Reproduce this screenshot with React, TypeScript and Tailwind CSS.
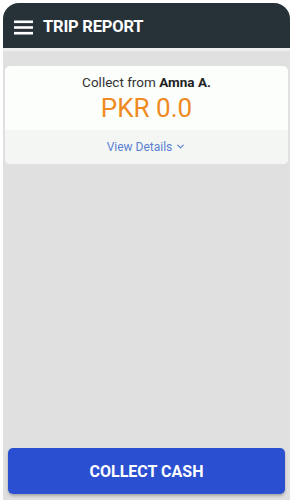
import { ChevronDown } from 'lucide-react'

export default function App() {
  return (
    <div className="w-[293px] h-[504px] bg-white pt-[3px] px-[3px] pb-[4px]" style={{ fontFamily: 'Roboto, "Liberation Sans", sans-serif' }}>
      <div className="h-full w-[287px] flex flex-col rounded-t-[16px] overflow-hidden bg-[#e0e0e0]">
        {/* Barra superior */}
        <div className="h-[45px] bg-[#263238] flex items-center pl-[11px] pt-[3px] gap-[10px] shrink-0">
          <svg width="19" height="15" viewBox="0 0 19 15">
            <rect x="0" y="0.5" width="19" height="2.6" fill="#fff" />
            <rect x="0" y="6.2" width="19" height="2.6" fill="#fff" />
            <rect x="0" y="11.9" width="19" height="2.6" fill="#fff" />
          </svg>
          <span className="text-white font-bold text-[16.5px] tracking-[-0.2px]">TRIP REPORT</span>
        </div>
        <div className="h-[3px] bg-[#eeeeee] shrink-0" />

        <div className="flex-1 flex flex-col px-[2px] pt-[15px]">
          {/* Tarjeta */}
          <div className="rounded-[5px] overflow-hidden bg-[#fbfefb]">
            <div className="pt-[7px] pb-[7px] flex flex-col items-center">
              <p className="text-[13.5px] text-[#333] leading-[19px]">
                Collect from <span className="font-bold text-[#222]">Amna A.</span>
              </p>
              <p className="text-[26px] text-[#ef8a22] leading-[30px] mt-[1px]">PKR 0.0</p>
            </div>
            <div className="bg-[#f3f6f3] h-[34px] flex items-center justify-center gap-[3px] pb-[1px]">
              <span className="text-[12px] text-[#5b7fd4]">View Details</span>
              <ChevronDown size={11} strokeWidth={2.5} className="text-[#5b7fd4]" />
            </div>
          </div>

          <div className="flex-1" />

          {/* Botón */}
          <div className="px-[3px] pb-[6px]">
            <button className="w-full h-[46px] rounded-[5px] bg-[#2b4fd1] text-white font-bold text-[16px] pt-[2px] shadow-[0_2px_3px_rgba(0,0,0,0.25)]">
              COLLECT CASH
            </button>
          </div>
        </div>
      </div>
    </div>
  )
}
